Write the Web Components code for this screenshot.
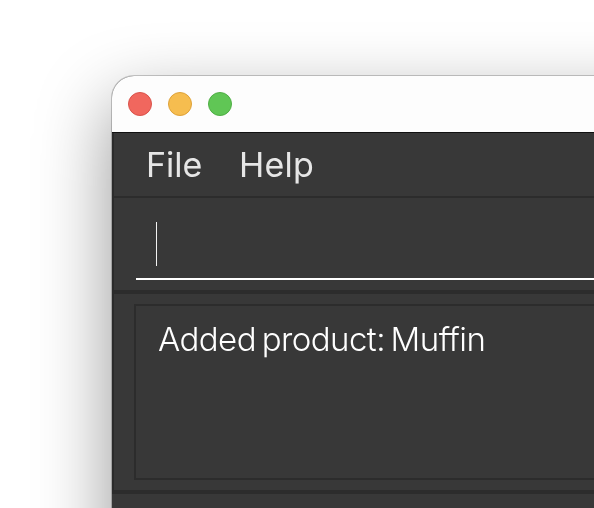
<!DOCTYPE html>
<html>
<head>
<meta charset="utf-8">
<style>
	html, body { margin: 0; height: 100%; overflow: hidden; background: #fff; }
	body { padding: 76px 0 0 112px; box-sizing: border-box; font-family: Inter, "Liberation Sans", sans-serif; }
</style>
</head>
<body>
<app-window>
	<menu-bar></menu-bar>
	<command-box></command-box>
	<result-box>Added product: Muffin</result-box>
</app-window>
<script>
const html = String.raw;

class AppWindow extends HTMLElement {
	constructor() {
		super();
		this.attachShadow({ mode: "open" }).innerHTML = html`
			<style>
				:host {
					display: block;
					width: 720px;
					height: 520px;
					background: #383838;
					border-radius: 22px 22px 0 0;
					box-shadow: 0 0 0 1px rgba(0,0,0,0.2), -2px 26px 72px rgba(0,0,0,0.4);
					overflow: hidden;
				}
				.title {
					height: 56px;
					background: #fdfdfd;
					border-bottom: 1px solid #111;
					display: flex;
					align-items: center;
					gap: 16px;
					padding-left: 16px;
				}
				.dot { width: 24px; height: 24px; box-sizing: border-box; border-radius: 50%; border: 1px solid; margin-top: -1px; }
				.red { background: #f1675e; border-color: #d9534b; }
				.yellow { background: #f6bd4f; border-color: #dea239; }
				.green { background: #60c655; border-color: #4fae45; }
				.body { border-left: 2px solid #2b2b2b; }
			</style>
			<div class="title">
				<div class="dot red"></div>
				<div class="dot yellow"></div>
				<div class="dot green"></div>
			</div>
			<div class="body"><slot></slot></div>
		`;
	}
}

class MenuBar extends HTMLElement {
	constructor() {
		super();
		this.attachShadow({ mode: "open" }).innerHTML = html`
			<style>
				:host {
					display: flex;
					height: 65px;
					box-sizing: border-box;
					border-bottom: 2px solid #2c2c2c;
					padding-left: 32px;
					gap: 37px;
					align-items: center;
					color: #e6e6e6;
					font-size: 34px;
					font-weight: 400;
				}
				/* own layer gives grayscale antialiasing, as in the reference */
				span { line-height: 1; will-change: transform; }
				span:first-child { letter-spacing: -0.4px; }
				span:last-child { letter-spacing: 0.2px; }
			</style>
			<span>File</span><span>Help</span>
		`;
	}
}

class CommandBox extends HTMLElement {
	constructor() {
		super();
		this.attachShadow({ mode: "open" }).innerHTML = html`
			<style>
				:host {
					display: block;
					height: 96px;
					box-sizing: border-box;
					border-bottom: 4px solid #2c2c2c;
					padding: 24px 0 0 22px;
				}
				.field { height: 56px; border-bottom: 2px solid #fff; padding-left: 20px; }
				.caret { display: block; width: 1px; height: 44px; background: #f2f2f2; }
			</style>
			<div class="field"><span class="caret"></span></div>
		`;
	}
}

class ResultBox extends HTMLElement {
	constructor() {
		super();
		this.attachShadow({ mode: "open" }).innerHTML = html`
			<style>
				:host {
					display: block;
					height: 200px;
					box-sizing: border-box;
					border-bottom: 4px solid #2c2c2c;
					padding: 10px 0 10px 20px;
				}
				.box {
					height: 176px;
					box-sizing: border-box;
					border: 2px solid #2c2c2c;
					padding: 13px 0 0 22px;
					color: #fff;
					font-size: 33px;
					font-weight: 300;
					line-height: 40px;
					letter-spacing: -0.56px;
					word-spacing: -3px;
				}
				.text { will-change: transform; }
			</style>
			<div class="box"><div class="text"><slot></slot></div></div>
		`;
	}
}

customElements.define("app-window", AppWindow);
customElements.define("menu-bar", MenuBar);
customElements.define("command-box", CommandBox);
customElements.define("result-box", ResultBox);
</script>
</body>
</html>
